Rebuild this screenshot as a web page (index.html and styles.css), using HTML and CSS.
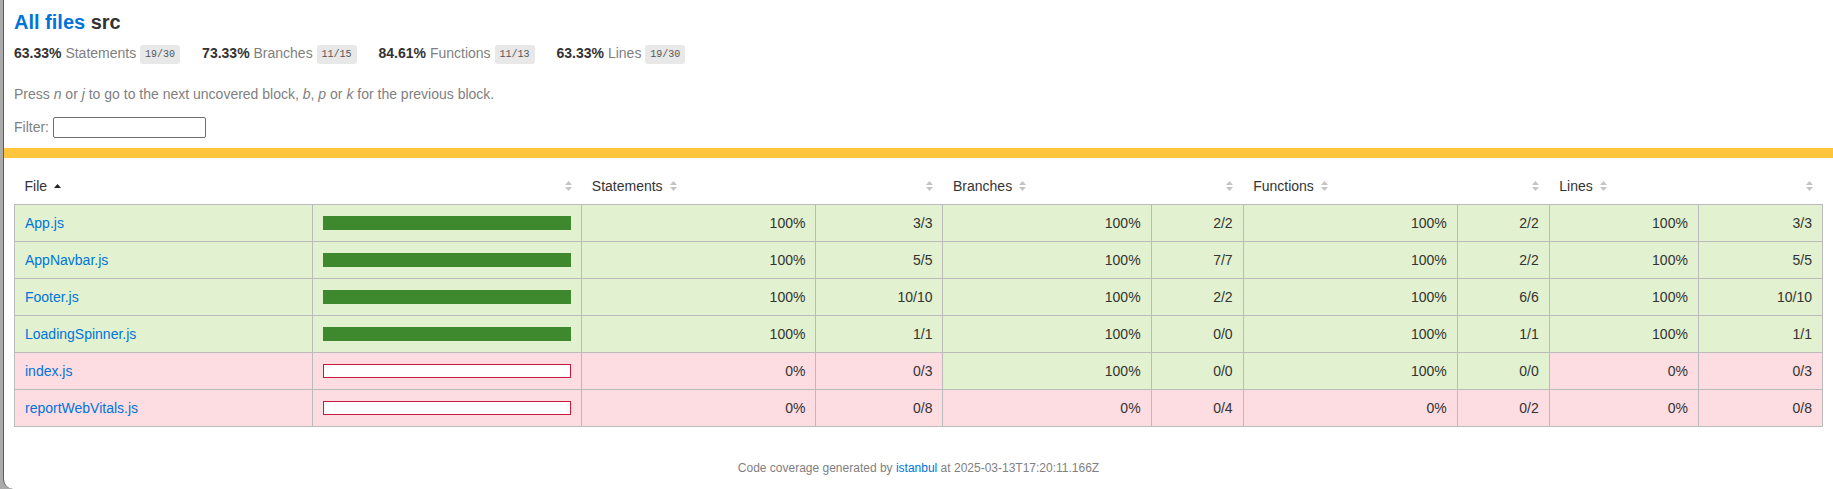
FILE: index.html
```html
<!doctype html>
<html lang="en">
<head>
<meta charset="utf-8">
<title>Code coverage report for src</title>
<link rel="stylesheet" href="styles.css">
</head>
<body>
<div class="wrapper">
  <div class="pad1">
    <h1><a href="#">All files</a> src</h1>
    <div class="stats">
      <div class="stat"><span class="strong">63.33% </span><span class="quiet">Statements</span> <span class="fraction">19/30</span></div>
      <div class="stat"><span class="strong">73.33% </span><span class="quiet">Branches</span> <span class="fraction">11/15</span></div>
      <div class="stat"><span class="strong">84.61% </span><span class="quiet">Functions</span> <span class="fraction">11/13</span></div>
      <div class="stat"><span class="strong">63.33% </span><span class="quiet">Lines</span> <span class="fraction">19/30</span></div>
    </div>
    <p class="quiet">Press <em>n</em> or <em>j</em> to go to the next uncovered block, <em>b</em>, <em>p</em> or <em>k</em> for the previous block.</p>
    <div class="quiet filter">Filter: <input type="search" class="search"></div>
  </div>
  <div class="status-line medium"></div>
  <div class="pad1">
    <table class="coverage-summary">
      <colgroup>
        <col class="c-file"><col class="c-pic"><col class="c-spct"><col class="c-sabs"><col class="c-bpct"><col class="c-babs"><col class="c-fpct"><col class="c-fabs"><col class="c-lpct"><col class="c-labs">
      </colgroup>
      <thead>
        <tr>
          <th class="file">File<span class="sorter sorted"><svg width="7" height="10" viewBox="0 0 7 10"><polygon points="0,7 7,7 3.5,3" fill="#222"/></svg></span></th>
          <th class="pic"><span class="sorter"><svg width="7" height="10" viewBox="0 0 7 10"><polygon points="3.5,0 7,4 0,4" fill="#c4c4c4"/><polygon points="0,6 7,6 3.5,10" fill="#c4c4c4"/></svg></span></th>
          <th class="pct">Statements<span class="sorter"><svg width="7" height="10" viewBox="0 0 7 10"><polygon points="3.5,0 7,4 0,4" fill="#c4c4c4"/><polygon points="0,6 7,6 3.5,10" fill="#c4c4c4"/></svg></span></th>
          <th class="abs"><span class="sorter"><svg width="7" height="10" viewBox="0 0 7 10"><polygon points="3.5,0 7,4 0,4" fill="#c4c4c4"/><polygon points="0,6 7,6 3.5,10" fill="#c4c4c4"/></svg></span></th>
          <th class="pct">Branches<span class="sorter"><svg width="7" height="10" viewBox="0 0 7 10"><polygon points="3.5,0 7,4 0,4" fill="#c4c4c4"/><polygon points="0,6 7,6 3.5,10" fill="#c4c4c4"/></svg></span></th>
          <th class="abs"><span class="sorter"><svg width="7" height="10" viewBox="0 0 7 10"><polygon points="3.5,0 7,4 0,4" fill="#c4c4c4"/><polygon points="0,6 7,6 3.5,10" fill="#c4c4c4"/></svg></span></th>
          <th class="pct">Functions<span class="sorter"><svg width="7" height="10" viewBox="0 0 7 10"><polygon points="3.5,0 7,4 0,4" fill="#c4c4c4"/><polygon points="0,6 7,6 3.5,10" fill="#c4c4c4"/></svg></span></th>
          <th class="abs"><span class="sorter"><svg width="7" height="10" viewBox="0 0 7 10"><polygon points="3.5,0 7,4 0,4" fill="#c4c4c4"/><polygon points="0,6 7,6 3.5,10" fill="#c4c4c4"/></svg></span></th>
          <th class="pct">Lines<span class="sorter"><svg width="7" height="10" viewBox="0 0 7 10"><polygon points="3.5,0 7,4 0,4" fill="#c4c4c4"/><polygon points="0,6 7,6 3.5,10" fill="#c4c4c4"/></svg></span></th>
          <th class="abs"><span class="sorter"><svg width="7" height="10" viewBox="0 0 7 10"><polygon points="3.5,0 7,4 0,4" fill="#c4c4c4"/><polygon points="0,6 7,6 3.5,10" fill="#c4c4c4"/></svg></span></th>
        </tr>
      </thead>
      <tbody>
        <tr>
          <td class="file high"><a href="#">App.js</a></td>
          <td class="pic high"><div class="chart"><div class="cover-fill"></div></div></td>
          <td class="pct high">100%</td><td class="abs high">3/3</td>
          <td class="pct high">100%</td><td class="abs high">2/2</td>
          <td class="pct high">100%</td><td class="abs high">2/2</td>
          <td class="pct high">100%</td><td class="abs high">3/3</td>
        </tr>
        <tr>
          <td class="file high"><a href="#">AppNavbar.js</a></td>
          <td class="pic high"><div class="chart"><div class="cover-fill"></div></div></td>
          <td class="pct high">100%</td><td class="abs high">5/5</td>
          <td class="pct high">100%</td><td class="abs high">7/7</td>
          <td class="pct high">100%</td><td class="abs high">2/2</td>
          <td class="pct high">100%</td><td class="abs high">5/5</td>
        </tr>
        <tr>
          <td class="file high"><a href="#">Footer.js</a></td>
          <td class="pic high"><div class="chart"><div class="cover-fill"></div></div></td>
          <td class="pct high">100%</td><td class="abs high">10/10</td>
          <td class="pct high">100%</td><td class="abs high">2/2</td>
          <td class="pct high">100%</td><td class="abs high">6/6</td>
          <td class="pct high">100%</td><td class="abs high">10/10</td>
        </tr>
        <tr>
          <td class="file high"><a href="#">LoadingSpinner.js</a></td>
          <td class="pic high"><div class="chart"><div class="cover-fill"></div></div></td>
          <td class="pct high">100%</td><td class="abs high">1/1</td>
          <td class="pct high">100%</td><td class="abs high">0/0</td>
          <td class="pct high">100%</td><td class="abs high">1/1</td>
          <td class="pct high">100%</td><td class="abs high">1/1</td>
        </tr>
        <tr>
          <td class="file low"><a href="#">index.js</a></td>
          <td class="pic low"><div class="chart"><div class="cover-empty"></div></div></td>
          <td class="pct low">0%</td><td class="abs low">0/3</td>
          <td class="pct high">100%</td><td class="abs high">0/0</td>
          <td class="pct high">100%</td><td class="abs high">0/0</td>
          <td class="pct low">0%</td><td class="abs low">0/3</td>
        </tr>
        <tr>
          <td class="file low"><a href="#">reportWebVitals.js</a></td>
          <td class="pic low"><div class="chart"><div class="cover-empty"></div></div></td>
          <td class="pct low">0%</td><td class="abs low">0/8</td>
          <td class="pct low">0%</td><td class="abs low">0/4</td>
          <td class="pct low">0%</td><td class="abs low">0/2</td>
          <td class="pct low">0%</td><td class="abs low">0/8</td>
        </tr>
      </tbody>
    </table>
  </div>
</div>
<div class="footer quiet small">Code coverage generated by <a href="#">istanbul</a> at 2025-03-13T17:20:11.166Z</div>
</body>
</html>
```
FILE: styles.css
```css
*, *::before, *::after { box-sizing: border-box; }
html {
  margin: 0;
  padding: 0;
  height: 100%;
  background: #ababab;
}
body {
  margin: 0 0 0 3px;
  padding: 0;
  min-height: 100%;
  background: #fff;
  border-left: 1px solid #5c5c5c;
  border-bottom-left-radius: 10px;
  font-family: "Liberation Sans", Arial, Helvetica, sans-serif;
  font-size: 14px;
  color: #333;
  display: flex;
  flex-direction: column;
}
.wrapper { flex: 1 0 auto; }
a { color: #0074d9; text-decoration: none; }
h1 { font-size: 20px; margin: 0; line-height: 25px; }
.strong { font-weight: bold; }
.quiet { color: #7f7f7f; }
.small { font-size: 12px; }
.pad1 { padding: 10px; }
.stats {
  display: flex;
  flex-wrap: wrap;
  padding: 10px 0 11px;
}
.stat { padding-right: 22px; }
.fraction {
  font-family: "Liberation Mono", "DejaVu Sans Mono", monospace;
  font-size: 10px;
  color: #555;
  background: #e8e8e8;
  padding: 4px 5px;
  border-radius: 3px;
  vertical-align: middle;
}
p { margin: 14px 0; line-height: 17px; }
.filter { line-height: 21px; }
.search {
  width: 153px;
  height: 21px;
  margin: 0;
  padding: 1px 4px;
  border: 1px solid #6e6e6e;
  border-radius: 2px;
  vertical-align: top;
  font: inherit;
  font-size: 13px;
  background: #fff;
}
.status-line { height: 10px; }
.status-line.medium { background: #ffc53d; }

.coverage-summary {
  border-collapse: collapse;
  width: 100%;
  table-layout: fixed;
}
.c-file { width: 298px; }
.c-pic { width: 269px; }
.c-spct { width: 234px; }
.c-sabs { width: 127px; }
.c-bpct { width: 208px; }
.c-babs { width: 92px; }
.c-fpct { width: 214px; }
.c-fabs { width: 92px; }
.c-lpct { width: 149px; }
.c-labs { width: 124px; }
.coverage-summary th,
.coverage-summary td {
  padding: 10px;
  line-height: 16px;
}
.coverage-summary th {
  text-align: left;
  font-weight: normal;
  white-space: nowrap;
}
.coverage-summary th.pic,
.coverage-summary th.abs,
.coverage-summary td.pct,
.coverage-summary td.abs { text-align: right; }
.coverage-summary tbody { border: 1px solid #bbb; }
.coverage-summary tbody tr { border-bottom: 1px solid #bbb; }
.coverage-summary td { border-right: 1px solid #bbb; }
.coverage-summary td:last-child { border-right: none; }
.coverage-summary td.file { white-space: nowrap; }
.sorter {
  display: inline-block;
  width: 7px;
  height: 10px;
  margin-left: 7px;
  line-height: 0;
}
.sorter svg { display: block; }
th.pic .sorter, th.abs .sorter { margin-left: 0; }

.high { background: #e2f1cf; }
.low { background: #fddce2; }
.chart { line-height: 0; }
.high .chart { border: 1px solid #3e882e; }
.low .chart { border: 1px solid #c51a3a; }
.cover-fill, .cover-empty { height: 12px; width: 100%; }
.high .cover-fill { background: #3e882e; }
.cover-empty { background: #fff; }

.footer {
  flex: 0 0 auto;
  height: 48px;
  padding: 20px 20px 14px;
  line-height: 14px;
  text-align: center;
}
```
